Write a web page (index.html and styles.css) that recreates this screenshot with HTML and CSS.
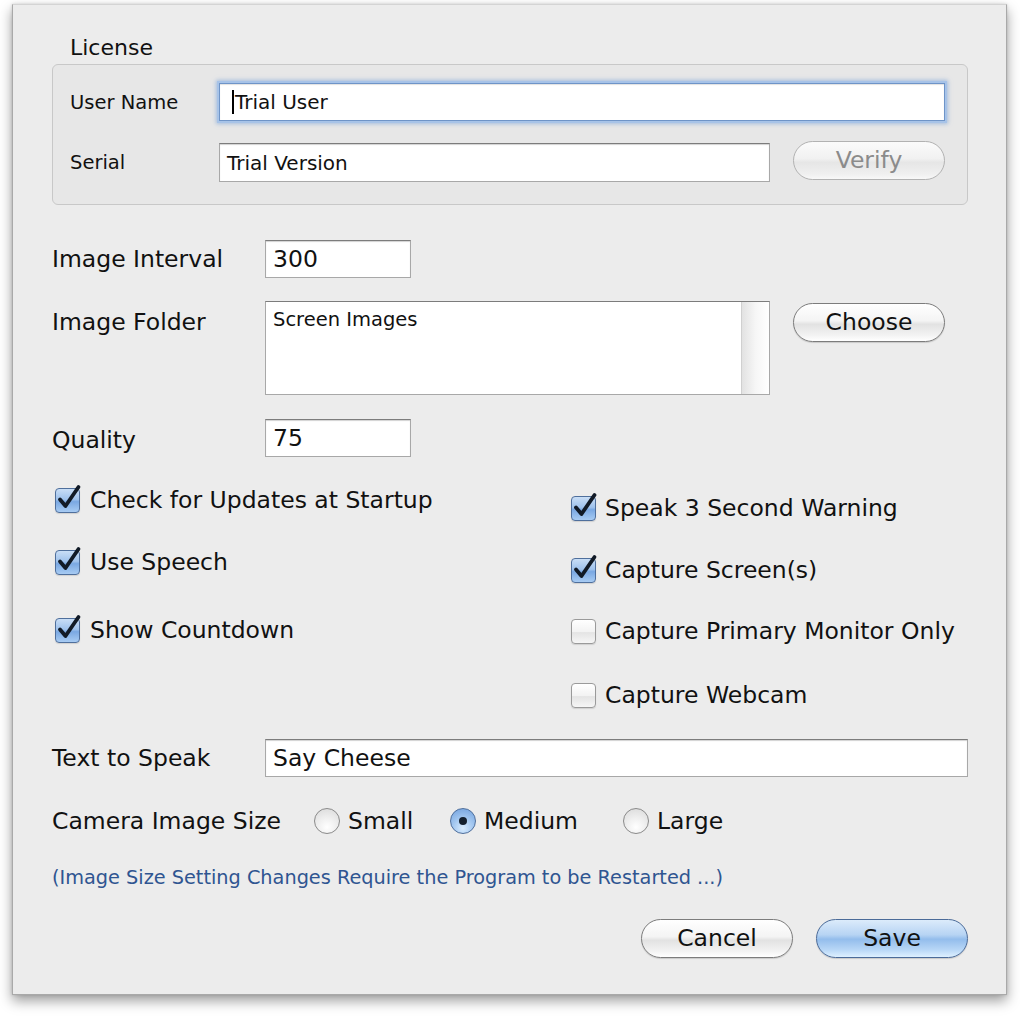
FILE: index.html
```html
<!DOCTYPE html>
<html>
<head>
<meta charset="utf-8">
<link rel="stylesheet" href="styles.css">
</head>
<body>
<div class="window">
  <div class="legend">License</div>
  <div class="group">
    <div class="grow">
      <span class="glabel">User Name</span>
      <div class="field field-focus field-small"><span class="caret"></span>Trial User</div>
    </div>
    <div class="grow grow-2">
      <span class="glabel">Serial</span>
      <div class="field field-small field-serial">Trial Version</div>
      <button class="btn btn-disabled">Verify</button>
    </div>
  </div>

  <div class="row row-interval">
    <span class="label">Image Interval</span>
    <div class="field field-num">300</div>
  </div>

  <div class="row row-folder">
    <span class="label label-top">Image Folder</span>
    <div class="textarea">
      <div class="ta-text">Screen Images</div>
      <div class="ta-scroll"></div>
    </div>
    <button class="btn btn-choose">Choose</button>
  </div>

  <div class="row row-quality">
    <span class="label">Quality</span>
    <div class="field field-num">75</div>
  </div>

  <div class="checks">
    <div class="col col-left">
      <div class="check"><span class="box on"><svg viewBox="0 0 30 30" width="30" height="30"><path d="M6 15.5 L11.5 22 L24.5 3" /></svg></span><span>Check for Updates at Startup</span></div>
      <div class="check gap-32"><span class="box on"><svg viewBox="0 0 30 30" width="30" height="30"><path d="M6 15.5 L11.5 22 L24.5 3" /></svg></span><span>Use Speech</span></div>
      <div class="check gap-38"><span class="box on"><svg viewBox="0 0 30 30" width="30" height="30"><path d="M6 15.5 L11.5 22 L24.5 3" /></svg></span><span>Show Countdown</span></div>
    </div>
    <div class="col col-right">
      <div class="check gap-8"><span class="box on"><svg viewBox="0 0 30 30" width="30" height="30"><path d="M6 15.5 L11.5 22 L24.5 3" /></svg></span><span>Speak 3 Second Warning</span></div>
      <div class="check gap-32"><span class="box on"><svg viewBox="0 0 30 30" width="30" height="30"><path d="M6 15.5 L11.5 22 L24.5 3" /></svg></span><span>Capture Screen(s)</span></div>
      <div class="check gap-31"><span class="box"></span><span>Capture Primary Monitor Only</span></div>
      <div class="check gap-34"><span class="box"></span><span>Capture Webcam</span></div>
    </div>
  </div>

  <div class="row row-speak">
    <span class="label">Text to Speak</span>
    <div class="field field-wide">Say Cheese</div>
  </div>

  <div class="row row-camera">
    <span class="label label-camera">Camera Image Size</span>
    <div class="opt opt-small"><span class="radio"></span>Small</div>
    <div class="opt opt-medium"><span class="radio radio-on"><span class="dot"></span></span>Medium</div>
    <div class="opt"><span class="radio"></span>Large</div>
  </div>

  <div class="note">(Image Size Setting Changes Require the Program to be Restarted ...)</div>

  <div class="actions">
    <button class="btn">Cancel</button>
    <button class="btn btn-default">Save</button>
  </div>
</div>
</body>
</html>
```
FILE: styles.css
```css
* { box-sizing: border-box; }
html, body {
  margin: 0;
  padding: 0;
  background: #ffffff;
}
body {
  font-family: "DejaVu Sans", "Liberation Sans", sans-serif;
  color: #111;
  width: 1020px;
  height: 1016px;
  overflow: hidden;
}
.window {
  margin: 4px 0 0 12px;
  width: 995px;
  height: 991px;
  background: #ececec;
  border: 1px solid #a9a9a9;
  border-top-color: #d4d4d4;
  box-shadow: 0 6px 12px rgba(0,0,0,0.38), 0 0 3px rgba(0,0,0,0.15);
  padding: 31px 38px 0 39px;
}
.legend {
  font-size: 22px;
  line-height: 24px;
  height: 24px;
  padding-left: 18px;
  margin-bottom: 4px;
}
.group {
  height: 141px;
  background: #e7e7e7;
  border: 1px solid #c8c8c8;
  border-radius: 6px;
  padding: 18px 22px 0 17px;
}
.grow {
  display: flex;
  align-items: center;
  height: 38px;
}
.grow-2 {
  margin-top: 22px;
  height: 39px;
}
.glabel {
  width: 149px;
  flex: none;
  font-size: 19.5px;
}
.field {
  height: 38px;
  background: #fff;
  border: 1px solid #a8a8a8;
  border-top-color: #7c7c7c;
  box-shadow: inset 0 1px 1px rgba(0,0,0,0.18);
  font-size: 23.5px;
  line-height: 36px;
  padding-left: 7px;
  white-space: nowrap;
  display: flex;
  align-items: center;
}
.field-small {
  font-size: 20px;
  flex: 1;
}
.field-focus {
  border-color: #6e94c8;
  box-shadow: 0 0 0 2px #a7c3e8, 0 0 4px 3px rgba(120,160,215,0.6), inset 0 1px 1px rgba(0,0,0,0.12);
  padding-left: 12px;
}
.caret {
  display: inline-block;
  width: 2px;
  height: 24px;
  background: #000;
  margin-right: 1px;
}
.field-serial {
  flex: none;
  width: 551px;
  height: 39px;
}
.btn {
  flex: none;
  width: 152px;
  height: 39px;
  border-radius: 20px;
  border: 1px solid #7c7c7c;
  background: linear-gradient(#ffffff 0%, #f4f4f4 45%, #e2e2e2 55%, #f3f3f3 85%, #ffffff 100%);
  box-shadow: 0 1px 1px rgba(0,0,0,0.15);
  font-family: "DejaVu Sans", "Liberation Sans", sans-serif;
  font-size: 23.5px;
  color: #111;
  padding: 0;
  line-height: 37px;
}
.grow-2 .btn {
  margin-left: 23px;
  margin-top: -4px;
}
.btn-disabled {
  color: #8b8b8b;
  border-color: #b2b2b2;
  background: linear-gradient(#fbfbfb 0%, #f1f1f1 45%, #e6e6e6 55%, #efefef 85%, #f8f8f8 100%);
  box-shadow: none;
}
.btn-default {
  border-color: #4b6b99;
  background: linear-gradient(#dcebfb 0%, #b7d4f3 40%, #93bdec 52%, #b7d6f6 80%, #def0ff 100%);
}
.row {
  display: flex;
  align-items: center;
}
.label {
  width: 213px;
  flex: none;
  font-size: 23.5px;
  line-height: 30px;
}
.row-interval { margin-top: 35px; }
.field-num { width: 146px; }
.row-folder {
  margin-top: 23px;
  align-items: flex-start;
}
.label-top { padding-top: 6px; }
.textarea {
  width: 505px;
  height: 94px;
  background: #fff;
  border: 1px solid #a8a8a8;
  border-top-color: #7c7c7c;
  display: flex;
}
.ta-text {
  flex: 1;
  font-size: 19.5px;
  padding: 6px 0 0 7px;
}
.ta-scroll {
  width: 28px;
  border-left: 1px solid #d0d0d0;
  background: linear-gradient(90deg, #e2e2e2, #f6f6f6 50%, #ffffff);
}
.btn-choose {
  margin-left: 23px;
  margin-top: 2px;
}
.row-quality { margin-top: 24px; }
.row-quality .label { padding-top: 3px; }
.checks {
  margin-top: 28px;
  display: grid;
  grid-template-columns: 516px 1fr;
}
.col {
  display: flex;
  flex-direction: column;
  padding-left: 3px;
}
.check {
  height: 30px;
  display: flex;
  align-items: center;
  gap: 10px;
  font-size: 23.5px;
  white-space: nowrap;
}
.col-right .check { gap: 9px; }
.gap-8 { margin-top: 8px; }
.gap-31 { margin-top: 31px; }
.gap-32 { margin-top: 32px; }
.gap-34 { margin-top: 34px; }
.gap-38 { margin-top: 38px; }
.box {
  position: relative;
  flex: none;
  width: 25px;
  height: 25px;
  border-radius: 4px;
  border: 1px solid #9a9a9a;
  background: linear-gradient(#ffffff, #f3f3f3 50%, #e4e4e4 55%, #f6f6f6);
  box-shadow: 0 1px 1px rgba(0,0,0,0.12);
}
.box.on {
  border-color: #4f6f9c;
  background: linear-gradient(#c9def6 0%, #9fc2ec 45%, #7aa8e2 55%, #a7cbf3 100%);
}
.box svg {
  position: absolute;
  left: -2px;
  top: -5px;
  overflow: visible;
}
.box svg path {
  fill: none;
  stroke: #111a26;
  stroke-width: 3.8;
  stroke-linecap: round;
  stroke-linejoin: round;
}
.row-speak { margin-top: 29px; }
.field-wide { flex: 1; }
.row-camera {
  margin-top: 29px;
  height: 30px;
}
.label-camera { width: 262px; }
.opt {
  display: flex;
  align-items: center;
  gap: 8px;
  font-size: 23.5px;
}
.opt-small { width: 136px; }
.opt-medium { width: 173px; }
.radio {
  width: 26px;
  height: 26px;
  border-radius: 50%;
  border: 1px solid #8a8a8a;
  background: radial-gradient(circle at 50% 75%, #ffffff 0%, #f0f0f0 40%, #d8d8d8 100%);
  display: flex;
  align-items: center;
  justify-content: center;
  flex: none;
}
.radio-on {
  border-color: #4f6f9c;
  background: radial-gradient(circle at 50% 80%, #d8ecff 0%, #a3c7f0 45%, #6f9fdc 100%);
}
.dot {
  width: 8px;
  height: 8px;
  border-radius: 50%;
  background: #14202e;
}
.note {
  margin-top: 30px;
  font-size: 19.3px;
  line-height: 24px;
  color: #2f5591;
  white-space: nowrap;
}
.actions {
  margin-top: 29px;
  display: flex;
  justify-content: flex-end;
  gap: 23px;
}
```
